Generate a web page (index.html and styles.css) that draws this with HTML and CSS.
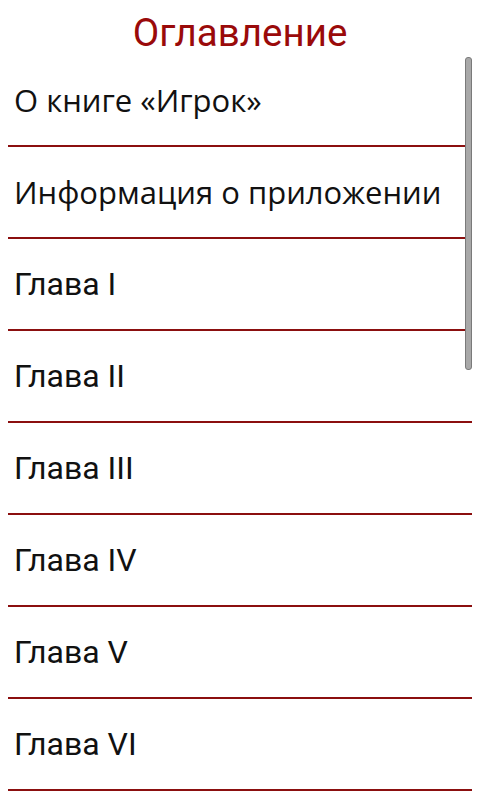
FILE: index.html
```html
<!DOCTYPE html>
<html lang="ru">
<head>
<meta charset="utf-8">
<link rel="stylesheet" href="styles.css">
</head>
<body>
<div class="screen">
  <h1 class="title">Оглавление</h1>
  <ul class="toc">
    <li class="item droid">О книге «Игрок»</li>
    <li class="item droid">Информация о приложении</li>
    <li class="item">Глава I</li>
    <li class="item">Глава II</li>
    <li class="item">Глава III</li>
    <li class="item">Глава IV</li>
    <li class="item">Глава V</li>
    <li class="item">Глава VI</li>
  </ul>
  <div class="scrollbar"></div>
</div>
</body>
</html>
```
FILE: styles.css
```css
html, body {
  margin: 0;
  padding: 0;
  background: #ffffff;
}
.screen {
  position: relative;
  width: 480px;
  height: 800px;
  overflow: hidden;
  font-family: Roboto, "Noto Sans", sans-serif;
}
.title {
  margin: 0;
  height: 55px;
  box-sizing: border-box;
  padding-top: 10px;
  display: flex;
  align-items: center;
  justify-content: center;
  font-family: Roboto, sans-serif;
  font-weight: 400;
  font-size: 38.5px;
  color: #9a0a0a;
}
.toc {
  list-style: none;
  margin: 0;
  padding: 0 8px;
}
.item {
  height: 90px;
  display: flex;
  align-items: center;
  padding-left: 6px;
  border-bottom: 2px solid #8b0f0f;
  font-size: 32px;
  color: #111111;
}
.item.droid {
  font-family: "Open Sans", "Noto Sans", sans-serif;
  font-size: 31px;
}
.scrollbar {
  position: absolute;
  left: 465px;
  top: 57px;
  width: 5px;
  height: 311px;
  background: #a8a8a8;
  border: 1px solid #7a7a7a;
  border-radius: 3px;
}
```
